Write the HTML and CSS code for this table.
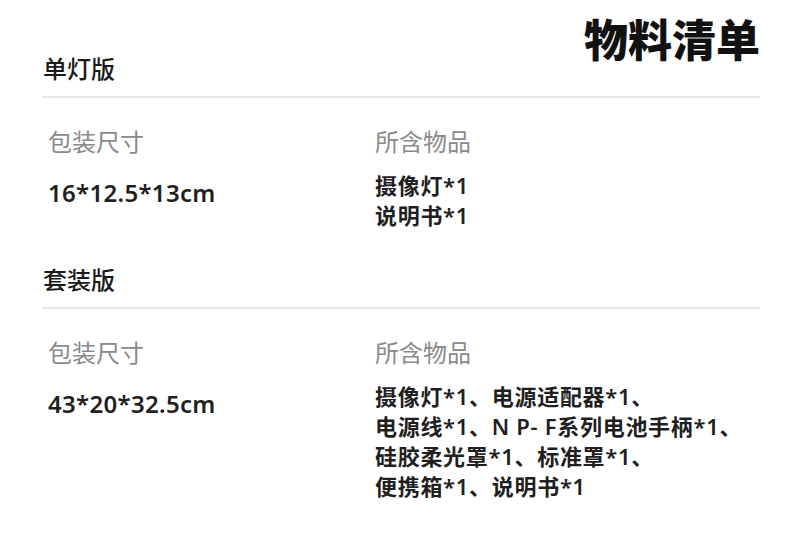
FILE: index.html
```html
<!DOCTYPE html>
<html lang="zh">
<head>
<meta charset="utf-8">
<link rel="stylesheet" href="styles.css">
</head>
<body>
<div class="page">
  <h1 class="title">物料清单</h1>
  <section class="block">
    <h2 class="version">单灯版</h2>
    <div class="grid">
      <div class="col">
        <div class="label">包装尺寸</div>
        <div class="size">16*12.5*13cm</div>
      </div>
      <div class="col">
        <div class="label">所含物品</div>
        <div class="items">摄像灯*1<br>说明书*1</div>
      </div>
    </div>
  </section>
  <section class="block second">
    <h2 class="version">套装版</h2>
    <div class="grid">
      <div class="col">
        <div class="label">包装尺寸</div>
        <div class="size">43*20*32.5cm</div>
      </div>
      <div class="col">
        <div class="label">所含物品</div>
        <div class="items">摄像灯*1、电源适配器*1、<br>电源线*1、N P- F系列电池手柄*1、<br>硅胶柔光罩*1、标准罩*1、<br>便携箱*1、说明书*1</div>
      </div>
    </div>
  </section>
</div>
</body>
</html>
```
FILE: styles.css
```css
* { box-sizing: border-box; margin: 0; padding: 0; }
html, body { background: #fff; }
body {
  font-family: "Noto Sans", "Noto Sans CJK SC", sans-serif;
  color: #1a1a1a;
}
.page {
  width: 790px;
  height: 543px;
  padding: 14px 30px 0 42px;
  display: flex;
  flex-direction: column;
}
.title {
  align-self: flex-end;
  font-size: 44px;
  font-weight: 900;
  line-height: 52px;
  color: #111;
  margin-bottom: -12px;
}
.version {
  font-size: 24px;
  font-weight: 500;
  line-height: 30px;
  padding-left: 1px;
  padding-bottom: 12px;
  border-bottom: 2px solid #e6e6e6;
  color: #1a1a1a;
}
.second { margin-top: 35px; }
.grid {
  display: grid;
  grid-template-columns: 327px 1fr;
  padding: 28px 0 0 6px;
}
.label {
  font-size: 24px;
  font-weight: 400;
  color: #8a8a8a;
  line-height: 32px;
}
.size {
  margin-top: 20px;
  font-size: 24px;
  font-weight: 600;
  letter-spacing: 0.3px;
  line-height: 30px;
  color: #1f1f1f;
}
.items {
  margin-top: 12px;
  font-size: 22px;
  font-weight: 600;
  letter-spacing: 0.7px;
  line-height: 30px;
  color: #1f1f1f;
}
```
